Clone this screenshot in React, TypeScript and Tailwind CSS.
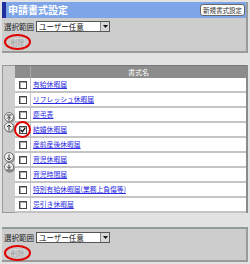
import React from "react";

const rows = [
  "有給休暇届",
  "リフレッシュ休暇届",
  "慶弔表",
  "結婚休暇届",
  "産前産後休暇届",
  "育児休暇届",
  "育児時間届",
  "特別有給休暇届(業務上負傷等)",
  "忌引き休暇届",
];

function Select() {
  return (
    <div className="flex items-center gap-[2px]">
      <span className="text-[7.5px] leading-none text-[#222]">選択範囲</span>
      <div className="flex h-[11px] w-[74px] items-center justify-between border border-[#555] bg-white">
        <span className="pl-[2px] text-[7.5px] leading-none text-[#111]">ユーザー任意</span>
        <span className="flex h-[9px] w-[9px] items-center justify-center border-l border-[#888] bg-[#d8d8d8]">
          <svg width="5" height="3" viewBox="0 0 5 3">
            <path d="M0 0h5L2.5 3z" fill="#111" />
          </svg>
        </span>
      </div>
    </div>
  );
}

function DeleteBtn() {
  return (
    <div className="relative ml-[5px] w-fit">
      <div className="flex h-[10px] w-[17px] items-center justify-center rounded-[2px] border border-[#c4c4c4] bg-[#d6d6d6] text-[7px] leading-none text-[#9a9a9a]">
        削除
      </div>
      <div className="absolute left-[-5px] top-[-3px] h-[16px] w-[27px] rounded-[50%] border-2 border-[#e00000]" />
    </div>
  );
}

function Circle({ kind }: { kind: "top" | "up" | "down" | "bottom" }) {
  return (
    <div className="flex h-[10px] w-[10px] items-center justify-center rounded-full border border-[#777] bg-[#eee] shadow-[1px_1px_0_#999]">
      <svg width="6" height="7" viewBox="0 0 6 7" fill="none" stroke="#333" strokeWidth="1">
        {kind === "up" && <path d="M3 6.5V1M1 3l2-2 2 2" />}
        {kind === "down" && <path d="M3 0.5V6M1 4l2 2 2-2" />}
        {kind === "top" && <path d="M0.5 1h5M3 6.5V2.5M1 4.5l2-2 2 2" />}
        {kind === "bottom" && <path d="M0.5 6h5M3 0.5V4.5M1 2.5l2 2 2-2" />}
      </svg>
    </div>
  );
}

function Checkbox({ checked }: { checked?: boolean }) {
  return (
    <span className="flex h-[8px] w-[8px] items-center justify-center border border-[#444] bg-white shadow-[inset_1px_1px_0_#aaa]">
      {checked && (
        <svg width="6" height="6" viewBox="0 0 6 6" fill="none" stroke="#111" strokeWidth="1.3">
          <path d="M0.8 3l1.6 1.7L5.2 1" />
        </svg>
      )}
    </span>
  );
}

export default function App() {
  return (
    <div
      className="flex h-[264px] w-[250px] flex-col bg-[#e2e2e2] px-[2px] pt-[2px]"
      style={{ fontFamily: '"Noto Sans CJK JP", "Noto Sans", sans-serif' }}
    >
      {/* Top panel */}
      <div className="flex h-[51px] w-[246px] flex-col border-b-2 border-r-2 border-[#9a9a9a] bg-[#cdcdcd]">
        <div className="flex h-[16px] items-center justify-between bg-[#7ea5e8]">
          <div className="flex h-full items-center">
            <div className="h-full w-[4px] bg-[#1f2f9e]" />
            <span className="ml-[2px] text-[10px] font-bold leading-none text-white">申請書式設定</span>
          </div>
          <div className="mr-[1px] flex h-[12px] items-center rounded-[3px] border border-[#666] bg-white px-[2px] text-[6.5px] leading-none text-[#333]">
            新規書式設定
          </div>
        </div>
        <div className="flex flex-col gap-[5px] pl-[2px] pt-[3px]">
          <Select />
          <DeleteBtn />
        </div>
      </div>

      {/* Table */}
      <div className="mt-[12px] flex w-[246px]">
        <div className="flex w-[13px] flex-col items-center border-y border-l border-[#999] bg-[#cfcfcf] pt-[46px]">
          <Circle kind="top" />
          <Circle kind="up" />
          <div className="h-[20px]" />
          <Circle kind="down" />
          <Circle kind="bottom" />
        </div>
        <div className="flex flex-1 flex-col border-r-2 border-[#8a8a8a]">
          <div className="flex h-[13px] border-t border-[#777] bg-[#8c8c8c]">
            <div className="w-[16px] border-r border-[#aaa]" />
            <div className="flex flex-1 items-center justify-center text-[7px] leading-none text-white">書式名</div>
          </div>
          {rows.map((r, i) => (
            <div key={r} className="flex h-[15px] border-b-2 border-[#c4c4c4] bg-white">
              <div className="relative flex w-[16px] items-center justify-center border-r border-[#c4c4c4]">
                <Checkbox checked={i === 3} />
                {i === 3 && (
                  <div className="absolute left-[-1px] top-[-2px] h-[17px] w-[17px] rounded-full border-2 border-[#e00000]" />
                )}
              </div>
              <div className="flex flex-1 items-center pl-[2px]">
                <span className="text-[6.8px] leading-none text-[#2a2adf] underline">{r}</span>
              </div>
            </div>
          ))}
        </div>
      </div>

      {/* Bottom panel */}
      <div className="mt-[14px] flex h-[35px] w-[246px] flex-col gap-[5px] border-b-2 border-r-2 border-t-2 border-b-[#9a9a9a] border-r-[#9a9a9a] border-t-[#8e9d95] bg-[#cdcdcd] pl-[2px] pt-[3px]">
        <Select />
        <DeleteBtn />
      </div>
    </div>
  );
}
